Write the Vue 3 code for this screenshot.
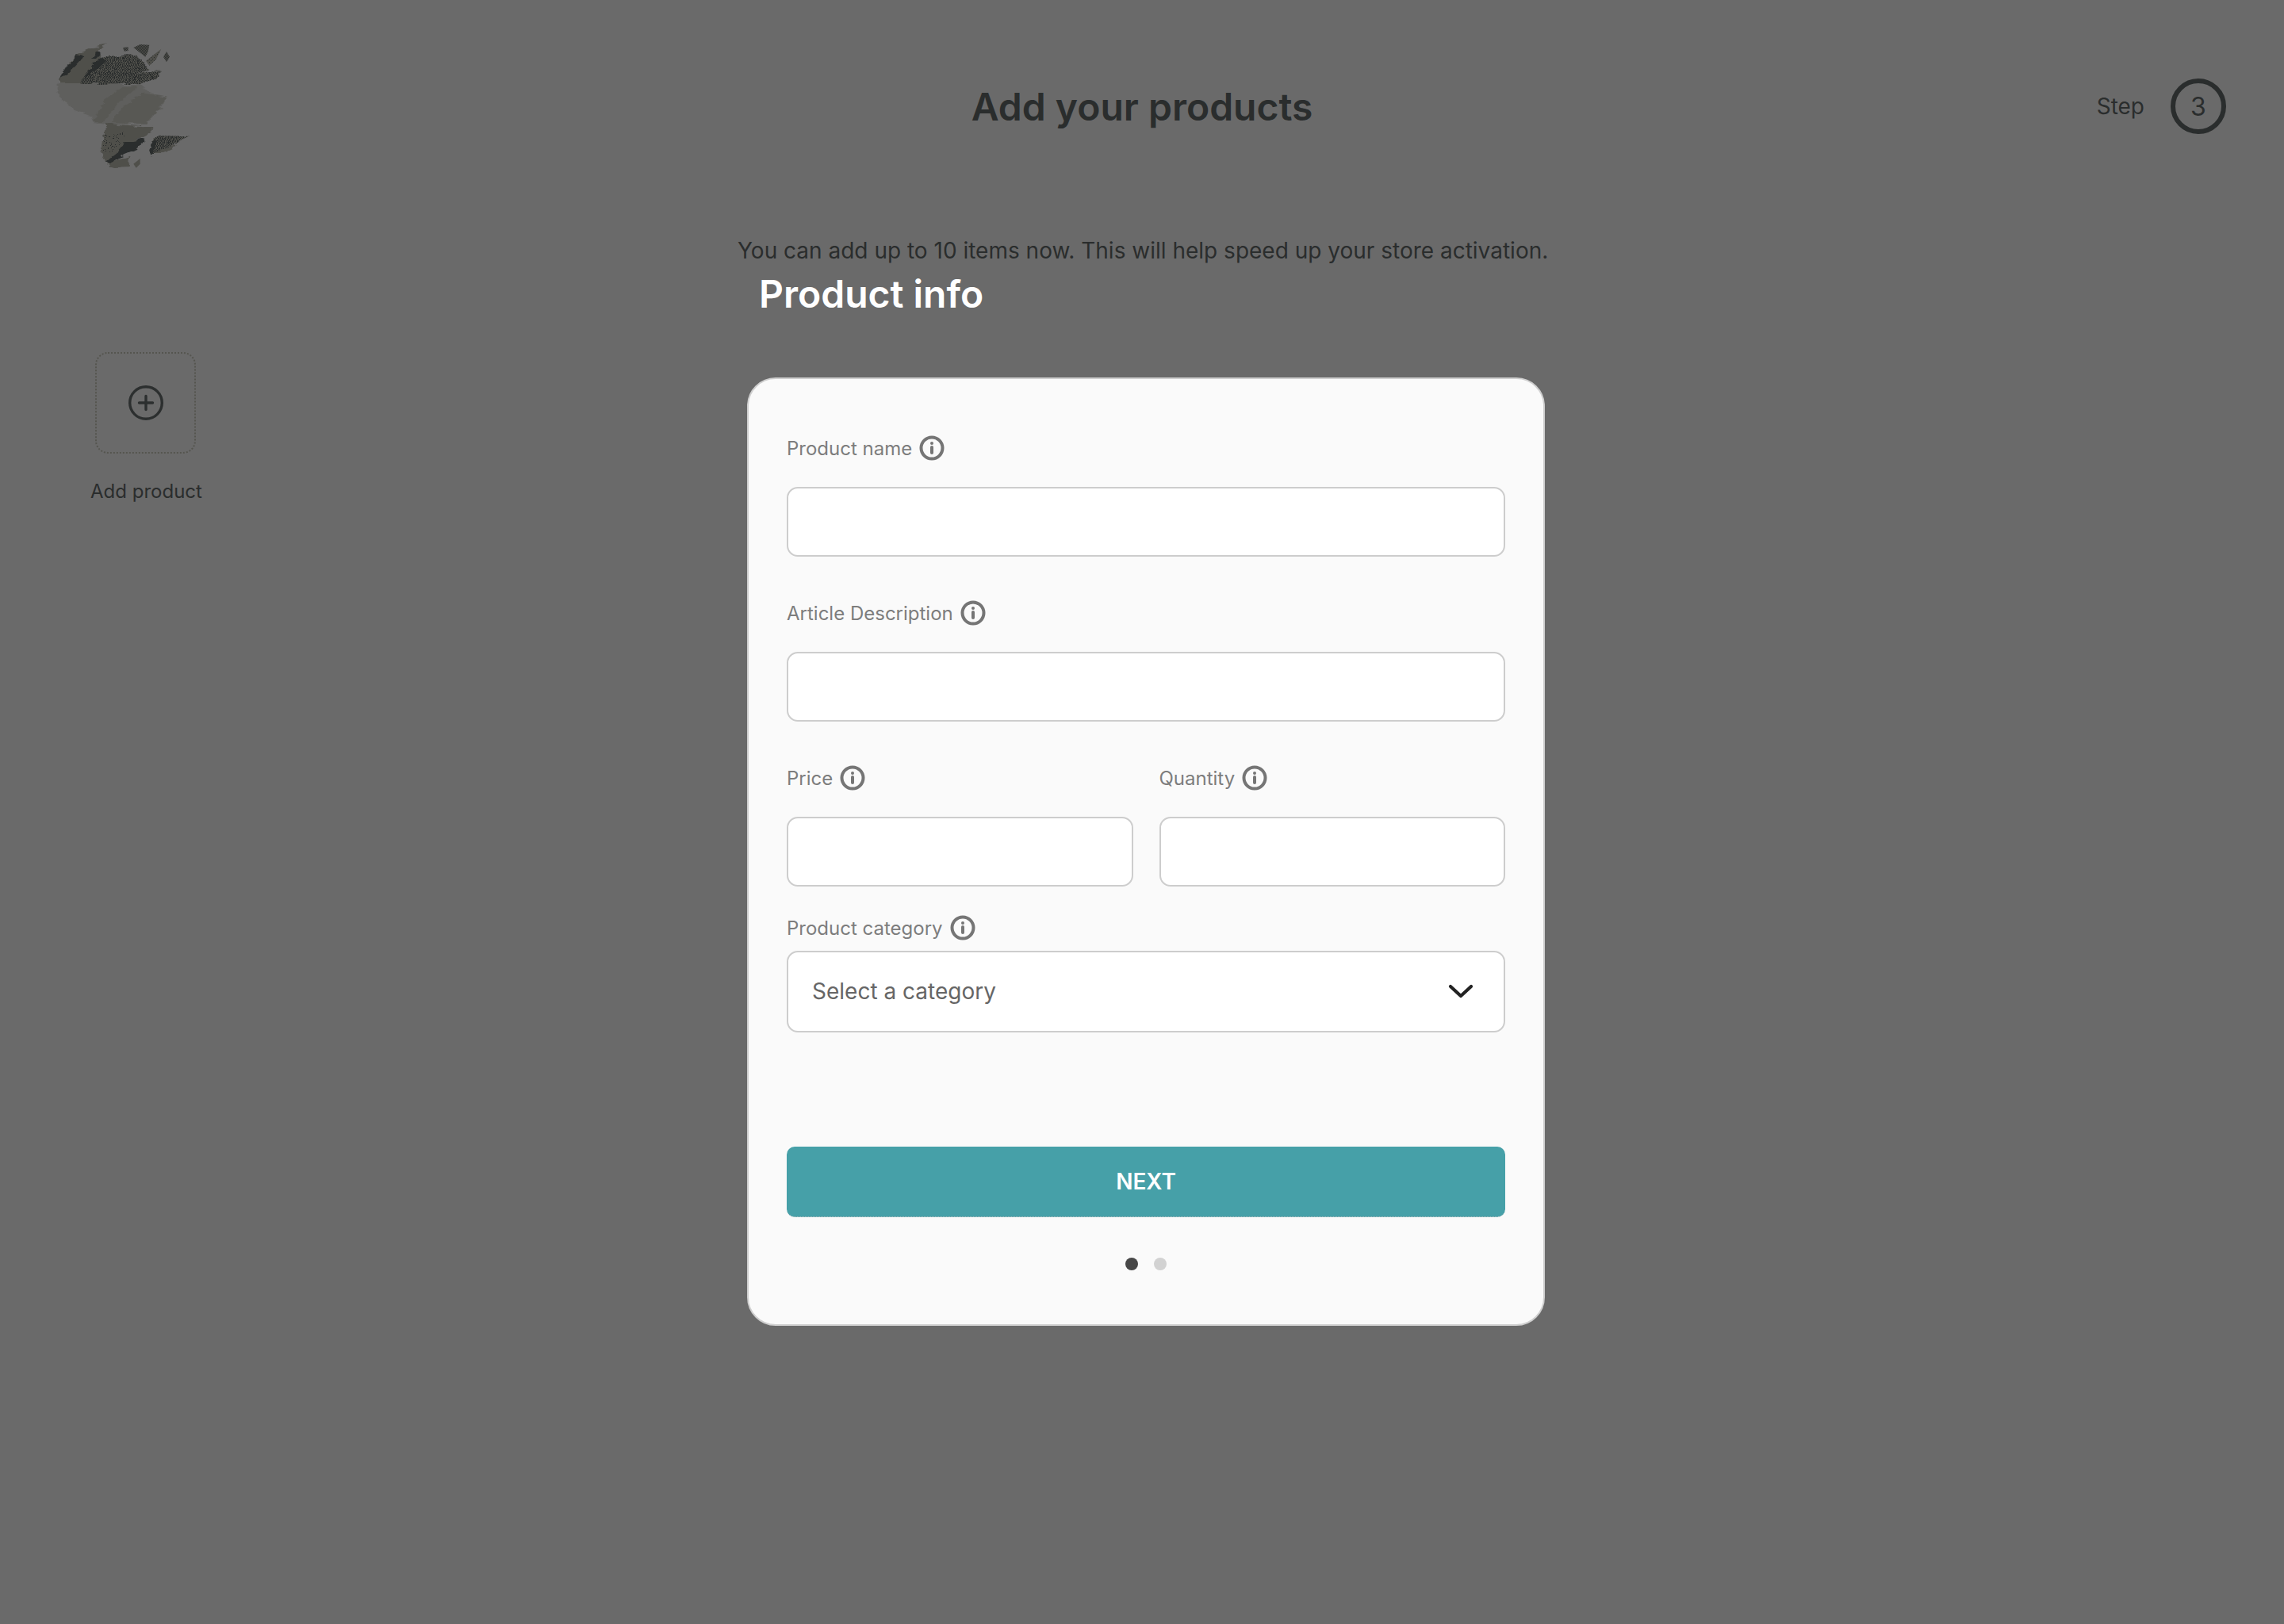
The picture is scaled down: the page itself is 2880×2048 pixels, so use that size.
<script setup>
const infoFields = {
  name: 'Product name',
  description: 'Article Description',
  price: 'Price',
  quantity: 'Quantity',
  category: 'Product category'
}
</script>

<template>
  <div class="page">
    <header class="header">
      <svg class="logo" viewBox="0 0 720 600" width="240" height="200" aria-label="Logo">
        <defs>
          <pattern id="dense" width="6" height="6" patternUnits="userSpaceOnUse">
            <rect width="6" height="6" fill="#4f4f4a" />
            <rect width="3" height="3" fill="#2a2d2d" />
            <rect x="3" y="3" width="3" height="3" fill="#2a2d2d" />
          </pattern>
          <pattern id="spots" width="12" height="12" patternUnits="userSpaceOnUse">
            <rect width="12" height="12" fill="#4f4f4a" />
            <rect width="3" height="3" fill="#2a2d2d" />
            <rect x="6" y="6" width="3" height="3" fill="#2a2d2d" />
          </pattern>
          <filter id="brush" x="-10%" y="-10%" width="120%" height="120%" color-interpolation-filters="sRGB">
            <feTurbulence type="fractalNoise" baseFrequency="0.02 0.07" numOctaves="2" seed="7" result="n" />
            <feDisplacementMap in="SourceGraphic" in2="n" scale="22" xChannelSelector="R" yChannelSelector="G" />
          </filter>
        </defs>
        <g filter="url(#brush)">
          <path fill="#4f4f4a" fill-opacity=".4" d="M98 225L330 225L360 235L415 230L450 262L512 275L490 320L440 365L430 380L285 380L230 375L225 350L160 325L115 285L98 260Z" />
          <path fill="#4f4f4a" fill-opacity=".45" d="M230 372L285 280L340 240L400 240L330 300L270 372Z" />
          <path fill="#4f4f4a" fill-opacity=".45" d="M300 375L350 310L420 262L512 275L480 325L430 380Z" />
          <path fill="#4f4f4a" d="M105 208L170 115L230 90L285 78L255 100L265 125L225 170L195 225L105 225Z" />
          <path fill="#2a2d2d" d="M105 208L120 170L150 150L170 115L200 120L170 155L135 190Z" />
          <path fill="url(#dense)" d="M180 228L230 150L265 128L340 118L395 118L415 145L445 170L400 190L350 225L250 228Z" />
          <path fill="#2a2d2d" d="M195 210L235 150L262 128L280 140L235 180Z" />
          <path fill="#2a2d2d" d="M228 130L245 105L265 110L240 135Z" />
          <path fill="url(#dense)" d="M350 228L380 195L440 180L492 182L470 205L420 228Z" />
          <path fill="#4f4f4a" d="M280 378L460 390L440 420L400 440L340 490L290 530L262 485L275 420Z" />
          <path fill="url(#spots)" d="M272 420L350 410L350 430L300 490L265 480Z" />
          <path fill="#2a2d2d" d="M280 520L320 490L350 450L430 435L390 480L340 500L300 530Z" />
          <path fill="#4f4f4a" d="M290 545L300 525L370 500L365 540Z" />
          <path fill="url(#dense)" d="M445 480L455 445L480 420L595 422L550 450L470 490L455 500Z" />
          <path fill="#2a2d2d" d="M445 480L455 445L475 445L462 470L465 495L450 498Z" />
          <path fill="#4f4f4a" d="M465 490L530 460L550 462L490 490Z" />
        </g>
        <path fill="url(#dense)" d="M385 90L410 78L445 80L440 105L430 125Z" />
        <path fill="url(#dense)" d="M345 90L365 88L365 102L350 104Z" />
        <path fill="url(#spots)" d="M432 140L490 95L470 135L445 158Z" />
        <path fill="url(#dense)" d="M498 125L510 105L522 125L510 145Z" />
        <path fill="#4f4f4a" d="M385 530L410 510L410 530L395 545Z" />
      </svg>
      <h1 class="title">Add your products</h1>
      <div class="step">
        <span class="step-label">Step</span>
        <span class="step-circle">3</span>
      </div>
    </header>

    <div class="body">
      <aside class="aside">
        <div class="add-box">
          <svg viewBox="0 0 44 44" width="44" height="44" fill="none" stroke="#2c2f2f" stroke-width="3.4" stroke-linecap="round">
            <circle cx="22" cy="22" r="20.3" />
            <path d="M22 13.5v17M13.5 22h17" />
          </svg>
        </div>
        <div class="add-label">Add product</div>
      </aside>

      <main class="main">
        <p class="subtitle">You can add up to 10 items now. This will help speed up your store activation.</p>
        <h2 class="section-title">Product info</h2>

        <section class="card">
          <div class="label">
            <span>{{ infoFields.name }}</span>
            <svg class="info" viewBox="0 0 32 32"><circle cx="16" cy="16" r="13.5" /><path d="M16 15v7" /><circle class="dot" cx="16" cy="10" r="2" /></svg>
          </div>
          <input class="input" type="text" />

          <div class="label second">
            <span>{{ infoFields.description }}</span>
            <svg class="info" viewBox="0 0 32 32"><circle cx="16" cy="16" r="13.5" /><path d="M16 15v7" /><circle class="dot" cx="16" cy="10" r="2" /></svg>
          </div>
          <input class="input" type="text" />

          <div class="row">
            <div class="col">
              <div class="label">
                <span>{{ infoFields.price }}</span>
                <svg class="info" viewBox="0 0 32 32"><circle cx="16" cy="16" r="13.5" /><path d="M16 15v7" /><circle class="dot" cx="16" cy="10" r="2" /></svg>
              </div>
              <input class="input" type="text" />
            </div>
            <div class="col">
              <div class="label">
                <span>{{ infoFields.quantity }}</span>
                <svg class="info" viewBox="0 0 32 32"><circle cx="16" cy="16" r="13.5" /><path d="M16 15v7" /><circle class="dot" cx="16" cy="10" r="2" /></svg>
              </div>
              <input class="input" type="text" />
            </div>
          </div>

          <div class="label category">
            <span>{{ infoFields.category }}</span>
            <svg class="info" viewBox="0 0 32 32"><circle cx="16" cy="16" r="13.5" /><path d="M16 15v7" /><circle class="dot" cx="16" cy="10" r="2" /></svg>
          </div>
          <div class="select">
            <span>Select a category</span>
            <svg viewBox="0 0 32 18" width="32" height="18" fill="none" stroke="#222" stroke-width="4.2" stroke-linecap="round" stroke-linejoin="round">
              <path d="M3 3l13 12L29 3" />
            </svg>
          </div>

          <button class="next" type="button">NEXT</button>

          <div class="dots">
            <span class="pip on"></span>
            <span class="pip"></span>
          </div>
        </section>
      </main>
    </div>
  </div>
</template>

<style>
html, body { margin: 0; background: #6a6a6a; }
</style>

<style scoped>
.page {
  width: 2880px;
  height: 2048px;
  background: #6a6a6a;
  font-family: Inter, "Noto Sans", sans-serif;
  color: #2a2d2d;
  overflow: hidden;
}
.header {
  height: 268px;
  display: grid;
  grid-template-columns: 1fr auto 1fr;
  align-items: center;
  padding: 0 73px;
  box-sizing: border-box;
}
.logo { align-self: start; margin: 30px 0 0 -33px; }
.title {
  margin: 0;
  padding-top: 1px;
  font-size: 48px;
  line-height: 60px;
  font-weight: 600;
  color: #2a2d2d;
}
.step {
  justify-self: end;
  display: flex;
  align-items: center;
  gap: 33px;
}
.step-label { font-size: 28px; line-height: 36px; }
.step-circle {
  width: 70px;
  height: 70px;
  box-sizing: border-box;
  border: 6px solid #2a2d2d;
  border-radius: 50%;
  display: flex;
  align-items: center;
  justify-content: center;
  font-size: 32px;
}
.body { display: flex; align-items: flex-start; }
.aside {
  width: 930px;
  box-sizing: border-box;
  padding: 176px 0 0 113px;
  flex: none;
}
.add-box {
  width: 127px;
  height: 128px;
  margin-left: 7px;
  box-sizing: border-box;
  border: 2px dotted #55554f;
  border-radius: 16px;
  display: flex;
  align-items: center;
  justify-content: center;
}
.add-label {
  width: 143px;
  margin-top: 31px;
  font-size: 24px;
  line-height: 34px;
  white-space: nowrap;
  text-align: center;
}
.main { width: 1021px; padding-top: 28px; flex: none; }
.subtitle {
  margin: 0;
  font-size: 28px;
  line-height: 40px;
  text-align: center;
  white-space: nowrap;
}
.section-title {
  margin: 5px 0 0 27px;
  font-size: 48px;
  line-height: 60px;
  font-weight: 600;
  color: #fff;
}
.card {
  width: 1006px;
  height: 1196px;
  margin: 75px 0 0 12px;
  box-sizing: border-box;
  padding: 69px 48px 0;
  background: #fafafa;
  border: 2px solid #cfcfcf;
  border-radius: 36px;
}
.label {
  display: flex;
  align-items: center;
  gap: 9px;
  height: 36px;
  font-size: 24px;
  color: #7d7d7d;
}
.info { width: 32px; height: 32px; fill: none; stroke: #757575; stroke-width: 4; stroke-linecap: round; }
.info .dot { fill: #757575; stroke: none; }
.input {
  display: block;
  width: 100%;
  height: 88px;
  margin-top: 31px;
  box-sizing: border-box;
  background: #fff;
  border: 2px solid #cdcdcd;
  border-radius: 14px;
  outline: none;
  padding: 0 30px;
}
.second { margin-top: 53px; }
.row { display: flex; gap: 33px; margin-top: 53px; }
.col { flex: 1 1 0; min-width: 0; }
.category { margin-top: 34px; }
.select {
  height: 103px;
  margin-top: 11px;
  box-sizing: border-box;
  background: #fff;
  border: 2px solid #cdcdcd;
  border-radius: 14px;
  display: flex;
  align-items: center;
  justify-content: space-between;
  padding: 0 38px 2px 30px;
  font-size: 28px;
  color: #666;
}
.next {
  display: block;
  width: 100%;
  height: 89px;
  margin-top: 144px;
  border: 0;
  border-bottom: 1px dotted #c4c4c4;
  border-radius: 10px;
  background: #46a0a8;
  color: #fff;
  font-family: inherit;
  font-size: 28px;
  font-weight: 600;
}
.dots {
  display: flex;
  justify-content: center;
  gap: 20px;
  margin-top: 51px;
}
.pip { width: 16px; height: 16px; border-radius: 50%; background: #d2d2d2; }
.pip.on { background: #474747; }
</style>
